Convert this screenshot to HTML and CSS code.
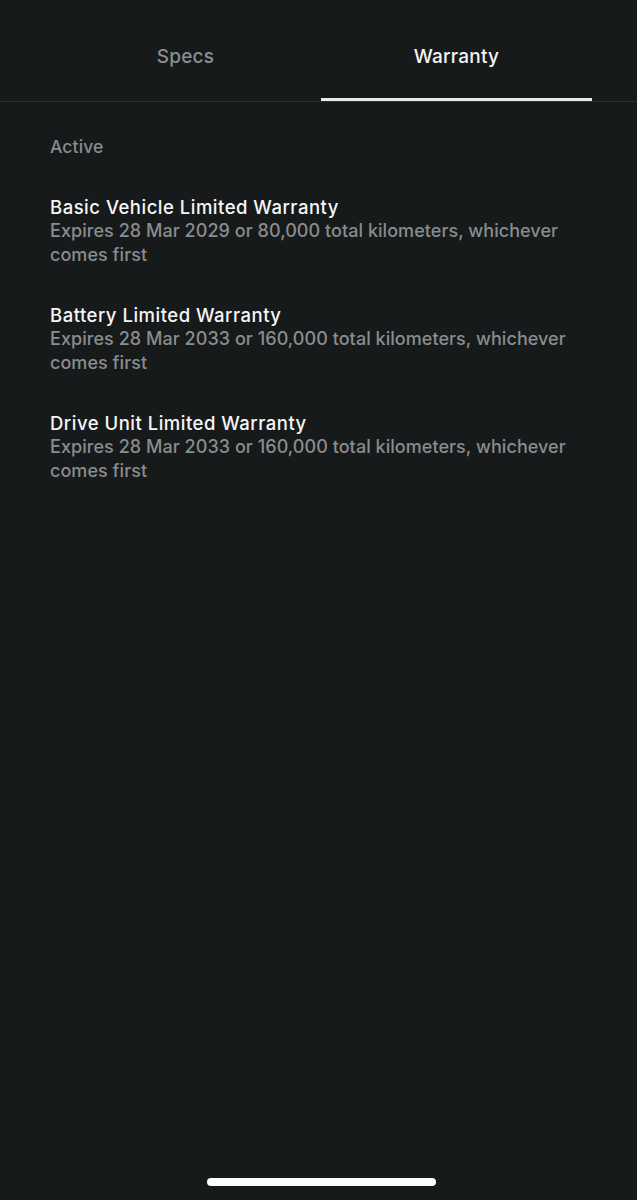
FILE: index.html
```html
<!DOCTYPE html>
<html>
<head>
<meta charset="utf-8">
<link rel="stylesheet" href="styles.css">
</head>
<body>
<div class="screen">
  <nav class="tabs">
    <div class="tab">Specs</div>
    <div class="tab active">Warranty</div>
  </nav>
  <main class="content">
    <div class="section-label">Active</div>
    <div class="item">
      <div class="item-title">Basic Vehicle Limited Warranty</div>
      <div class="item-desc">Expires 28 Mar 2029 or 80,000 total kilometers, whichever comes first</div>
    </div>
    <div class="item">
      <div class="item-title">Battery Limited Warranty</div>
      <div class="item-desc">Expires 28 Mar 2033 or 160,000 total kilometers, whichever comes first</div>
    </div>
    <div class="item">
      <div class="item-title">Drive Unit Limited Warranty</div>
      <div class="item-desc">Expires 28 Mar 2033 or 160,000 total kilometers, whichever comes first</div>
    </div>
  </main>
  <div class="home-bar"><span class="home-indicator"></span></div>
</div>
</body>
</html>
```
FILE: styles.css
```css
html, body {
  margin: 0;
  padding: 0;
  background: #171a1b;
}
body {
  font-family: Inter, "Noto Sans", "Liberation Sans", sans-serif;
  color: #ffffff;
  -webkit-font-smoothing: antialiased;
}
.screen {
  width: 637px;
  height: 1200px;
  display: flex;
  flex-direction: column;
  background: #171a1b;
}
.tabs {
  display: flex;
  padding: 0 45px 0 50px;
  height: 101px;
  border-bottom: 1px solid #2c2f30;
}
.tab {
  flex: 1;
  display: flex;
  align-items: center;
  justify-content: center;
  font-size: 19px;
  font-weight: 500;
  color: #8c8e8f;
  letter-spacing: 0.2px;
  padding-top: 11px;
  box-sizing: border-box;
}
.tab.active {
  color: #f4f4f4;
  border-bottom: 3px solid #e8e8e8;
  padding-top: 14px;
}
.content {
  flex: 1;
  padding: 34px 50px 0 50px;
}
.section-label {
  font-size: 17.5px;
  font-weight: 500;
  color: #8a8c8d;
  line-height: 22px;
  letter-spacing: 0.1px;
  margin-bottom: 37px;
}
.item {
  margin-bottom: 36px;
}
.item-title {
  font-size: 18.5px;
  font-weight: 500;
  color: #f6f6f6;
  line-height: 24px;
  letter-spacing: 0.5px;
}
.item-desc {
  font-size: 18px;
  font-weight: 500;
  color: #8a8c8d;
  line-height: 24px;
  letter-spacing: 0.05px;
}
.home-bar {
  height: 22px;
  display: flex;
  justify-content: center;
  padding-left: 6px;
}
.home-indicator {
  width: 229px;
  height: 8px;
  border-radius: 4px;
  background: #ffffff;
}
```
